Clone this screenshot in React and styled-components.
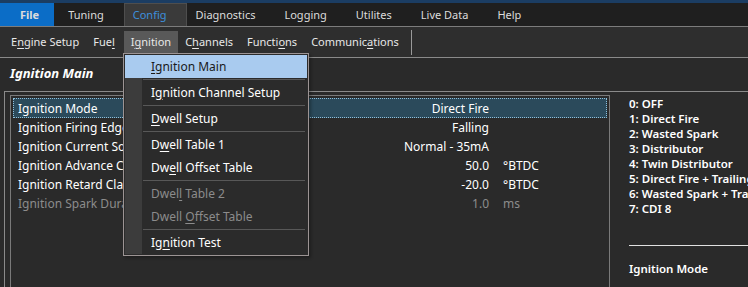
import styled, { createGlobalStyle } from "styled-components"

const GlobalStyle = createGlobalStyle`
  html, body {
    margin: 0;
    padding: 0;
    background: #2a2a2a;
    overflow: hidden;
  }
  * {
    box-sizing: border-box;
  }
`

const Window = styled.div`
  position: relative;
  width: 748px;
  height: 287px;
  display: flex;
  flex-direction: column;
  overflow: hidden;
  background: #2a2a2a;
  font-family: "Noto Sans", "Open Sans", sans-serif;
  font-size: 12px;
  color: #e8e8e8;
`

const TopStrip = styled.div`
  height: 3px;
  background: #1b3d63;
`

const MenuBar = styled.div`
  display: flex;
  height: 24px;
  background: #1f1f1f;
  border-bottom: 1px solid #7c7c7c;
  font-size: 11px;
`

const MenuTab = styled.div`
  height: 23px;
  line-height: 21px;
  padding: ${({ $first }) => ($first ? "0 14px 0 19px" : "0 19px 0 8px")};
  margin-right: ${({ $first }) => ($first ? "5px" : "0")};
  background: ${({ $variant }) =>
    $variant === "file" ? "#0b6dc7" : $variant === "open" ? "#3a3a3a" : "transparent"};
  border: 1px solid ${({ $variant }) => ($variant === "open" ? "#4e4e4e" : "transparent")};
  border-bottom: none;
  color: ${({ $variant }) => ($variant === "open" ? "#3d8fdc" : "#dcdcdc")};
  font-weight: ${({ $variant }) => ($variant === "file" ? 700 : 400)};
  white-space: nowrap;
`

const Toolbar = styled.div`
  display: flex;
  align-items: center;
  height: 31px;
  padding-left: 4px;
  background: #2e2e2e;
  border-bottom: 1px solid #8a8a8a;
  font-size: 11px;
`

const ToolItem = styled.div`
  height: 22px;
  line-height: 22px;
  padding: 0 7px;
  margin-right: ${({ $gap }) => $gap || 0}px;
  background: ${({ $pressed }) => ($pressed ? "#595959" : "transparent")};
  color: #e8e8e8;
  white-space: nowrap;
`

const ToolSeparator = styled.div`
  width: 1px;
  height: 25px;
  margin-left: 5px;
  background: #9a9a9a;
`

const U = styled.span`
  text-decoration: underline;
  text-underline-offset: 2px;
`

const Content = styled.div`
  flex: 1;
  display: flex;
  flex-direction: column;
  padding-left: 4px;
  min-height: 0;
`

const Title = styled.div`
  height: 33px;
  line-height: 30px;
  padding-left: 6px;
  font-size: 13px;
  font-weight: 700;
  font-style: italic;
  color: #ffffff;
`

const Panel = styled.div`
  flex: 1;
  display: flex;
  padding: 3px 0 0 5px;
  border-top: 1px solid #8a8a8a;
  border-left: 1px solid #8a8a8a;
`

const Grid = styled.div`
  width: 600px;
  padding: 2px;
  border: 1px solid #7a7a7a;
  border-bottom: none;
`

const Row = styled.div`
  display: grid;
  grid-template-columns: 290px 186px 1fr;
  align-items: center;
  height: ${({ $selected }) => ($selected ? 20 : 19)}px;
  background: ${({ $selected }) => ($selected ? "#2b4a5b" : "transparent")};
  outline: ${({ $selected }) => ($selected ? "1px dotted #8fc0dc" : "none")};
  outline-offset: -1px;
  color: ${({ $disabled }) => ($disabled ? "#8c8c8c" : "#ffffff")};
  white-space: nowrap;
`

const Label = styled.div`
  padding-left: 5px;
  overflow: hidden;
`

const Value = styled.div`
  text-align: right;
`

const Unit = styled.div`
  padding-left: 14px;
`

const Info = styled.div`
  flex: 1;
  padding: 1px 0 0 19px;
  font-size: 11.5px;
  font-weight: 600;
  color: #ffffff;
  line-height: 15px;
  white-space: nowrap;
  overflow: hidden;
`

const InfoRule = styled.div`
  height: 1px;
  margin: 29px 0 15px;
  background: #e0e0e0;
`

const Dropdown = styled.div`
  position: absolute;
  left: 123px;
  top: 53px;
  width: 186px;
  padding: 1px;
  background: #2b2b2b;
  border: 1px solid #9c9494;
  box-shadow: 2px 2px 3px rgba(0, 0, 0, 0.3);
`

const gutter = "linear-gradient(90deg, #3c3c3c 0 17px, transparent 17px)"

const DropItem = styled.div`
  height: 23px;
  line-height: 23px;
  padding-left: 26px;
  background: ${({ $active }) => ($active ? "#a9cbef" : gutter)};
  color: ${({ $active, $disabled }) => ($active ? "#1a1a1a" : $disabled ? "#8c8c8c" : "#ffffff")};
  white-space: nowrap;
`

const DropSeparator = styled.div`
  height: 3px;
  padding: 1px 2px 1px 18px;
  background: ${gutter};

  &::after {
    content: "";
    display: block;
    height: 1px;
    background: #585858;
  }
`

const menus = ["Tuning", "Config", "Diagnostics", "Logging", "Utilites", "Live Data", "Help"]

const rows = [
  { label: "Ignition Mode", value: "Direct Fire", selected: true },
  { label: "Ignition Firing Edge", value: "Falling" },
  { label: "Ignition Current Source", value: "Normal - 35mA" },
  { label: "Ignition Advance Clamp", value: "50.0", unit: "°BTDC" },
  { label: "Ignition Retard Clamp", value: "-20.0", unit: "°BTDC" },
  { label: "Ignition Spark Duration", value: "1.0", unit: "ms", disabled: true },
]

const modes = [
  "0: OFF",
  "1: Direct Fire",
  "2: Wasted Spark",
  "3: Distributor",
  "4: Twin Distributor",
  "5: Direct Fire + Trailing",
  "6: Wasted Spark + Trailing",
  "7: CDI 8",
]

export default function App() {
  return (
    <Window>
      <GlobalStyle />
      <TopStrip />
      <MenuBar>
        <MenuTab $first $variant="file">File</MenuTab>
        {menus.map((m) => (
          <MenuTab key={m} $variant={m === "Config" ? "open" : undefined}>
            {m}
          </MenuTab>
        ))}
      </MenuBar>

      <Toolbar>
        <ToolItem>E<U>n</U>gine Setup</ToolItem>
        <ToolItem $gap={2}>Fue<U>l</U></ToolItem>
        <ToolItem $pressed>I<U>g</U>nition</ToolItem>
        <ToolItem>C<U>h</U>annels</ToolItem>
        <ToolItem>Functi<U>o</U>ns</ToolItem>
        <ToolItem>Communic<U>a</U>tions</ToolItem>
        <ToolSeparator />
      </Toolbar>

      <Content>
        <Title>Ignition Main</Title>
        <Panel>
          <Grid>
            {rows.map((r) => (
              <Row key={r.label} $selected={r.selected} $disabled={r.disabled}>
                <Label>{r.label}</Label>
                <Value>{r.value}</Value>
                <Unit>{r.unit}</Unit>
              </Row>
            ))}
          </Grid>
          <Info>
            {modes.map((m) => (
              <div key={m}>{m}</div>
            ))}
            <InfoRule />
            <div>Ignition Mode</div>
          </Info>
        </Panel>
      </Content>

      <Dropdown>
        <DropItem $active><U>I</U>gnition Main</DropItem>
        <DropSeparator />
        <DropItem>I<U>g</U>nition Channel Setup</DropItem>
        <DropSeparator />
        <DropItem><U>D</U>well Setup</DropItem>
        <DropSeparator />
        <DropItem>D<U>w</U>ell Table 1</DropItem>
        <DropItem>Dw<U>e</U>ll Offset Table</DropItem>
        <DropSeparator />
        <DropItem $disabled>Dwel<U>l</U> Table 2</DropItem>
        <DropItem $disabled>Dwell <U>O</U>ffset Table</DropItem>
        <DropSeparator />
        <DropItem>Ig<U>n</U>ition Test</DropItem>
      </Dropdown>
    </Window>
  )
}
